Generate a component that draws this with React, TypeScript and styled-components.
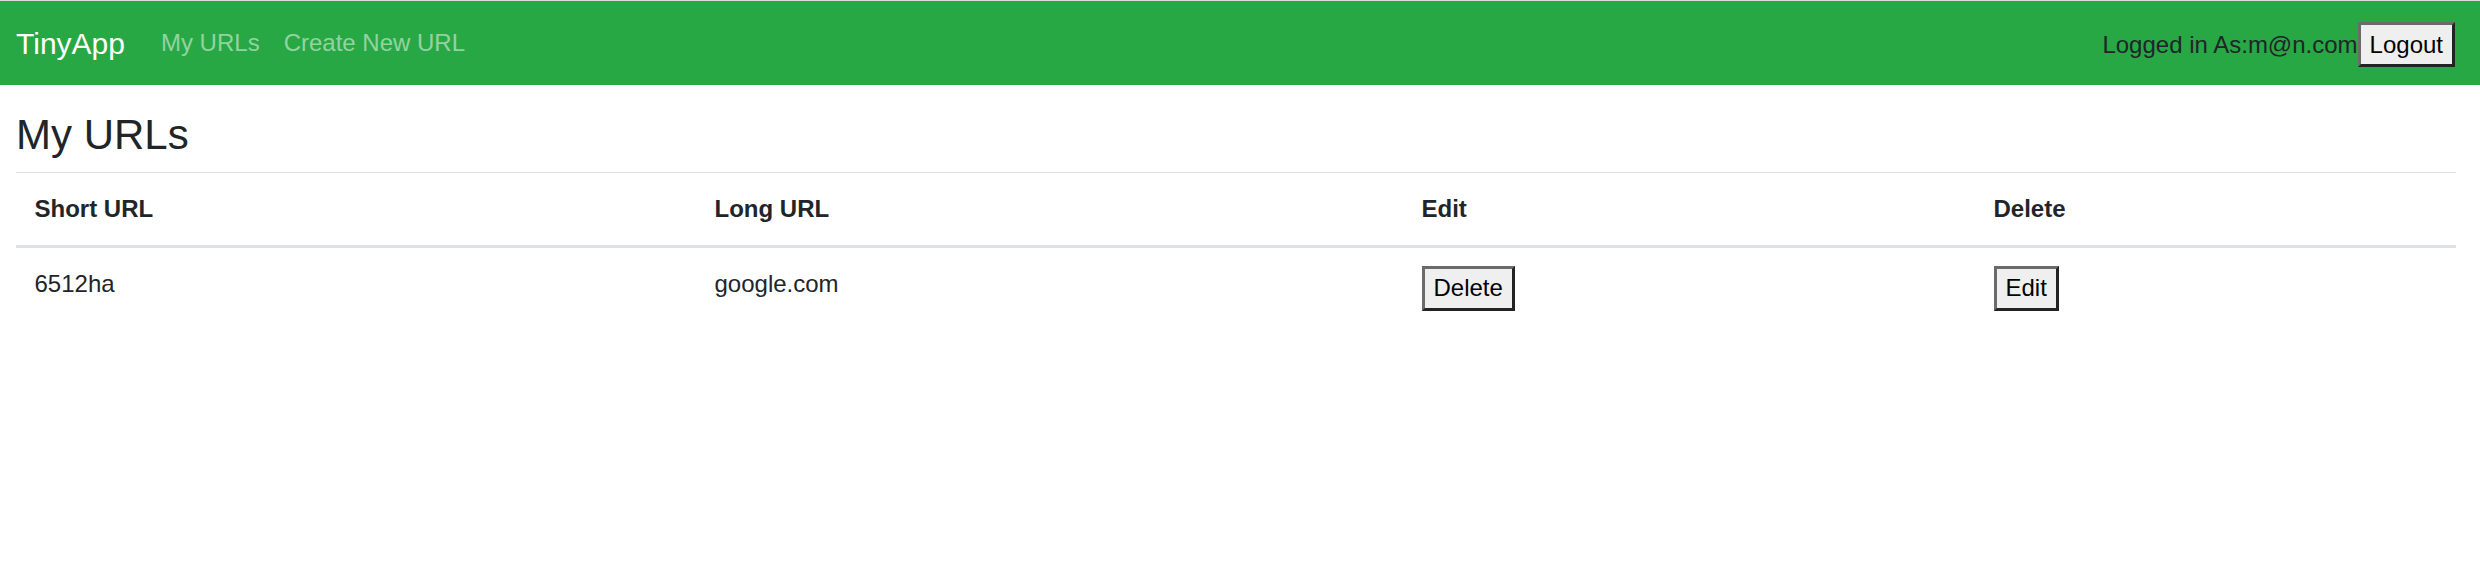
import React from 'react';
import styled, { createGlobalStyle } from 'styled-components';

const GlobalStyle = createGlobalStyle`
  *, *::before, *::after { box-sizing: border-box; }
  html, body { margin: 0; padding: 0; background: #fff; }
  body {
    font-family: "Liberation Sans", Arial, Helvetica, sans-serif;
    font-size: 24px;
    line-height: 1.5;
    color: #212529;
  }
`;

const Navbar = styled.nav`
  display: flex;
  align-items: center;
  height: 85px;
  border-top: 1px solid #dcdcdc;
  background: #28a745;
  padding: 0 25px 0 16px;
`;

const Brand = styled.a`
  font-size: 30px;
  line-height: 1.5;
  color: #fff;
  text-decoration: none;
  margin-right: 24px;
`;

const NavLinks = styled.div`
  display: flex;
  align-items: center;
`;

const NavLink = styled.a`
  color: rgba(255, 255, 255, 0.5);
  text-decoration: none;
  padding: 0 12px;
`;

const UserArea = styled.div`
  margin-left: auto;
  display: flex;
  align-items: center;
  padding-top: 3px;
`;

const UserText = styled.span`
  color: #212529;
`;

const Button = styled.button`
  font-family: "Liberation Sans", Arial, Helvetica, sans-serif;
  font-size: 24px;
  line-height: 1.5;
  color: #000;
  background: #efefef;
  padding: 1.5px 9px;
  border-width: 3px;
  border-style: solid;
  border-color: #6b6b6b #232323 #232323 #6b6b6b;
  border-radius: 0;
  margin: 0;
  cursor: pointer;
`;

const Main = styled.main`
  padding: 0 24px 0 16px;
`;

const Title = styled.h1`
  font-size: 42px;
  font-weight: 400;
  line-height: 1.2;
  margin: 24.5px 0 12px;
`;

const Table = styled.table`
  width: 100%;
  border-collapse: collapse;
  table-layout: fixed;
`;

const Col = styled.col<{ $w: number }>`
  width: ${p => p.$w}px;
`;

const Th = styled.th`
  text-align: left;
  font-weight: 700;
  vertical-align: bottom;
  padding: 18px 18.5px;
  border-top: 1px solid #dee2e6;
  border-bottom: 3px solid #dee2e6;
`;

const Td = styled.td`
  vertical-align: top;
  padding: 18px 18.5px;
  border-top: 1px solid #dee2e6;
`;

const rows = [{ short: '6512ha', long: 'google.com' }];

export default function App() {
  return (
    <>
      <GlobalStyle />
      <Navbar>
        <Brand href="#">TinyApp</Brand>
        <NavLinks>
          <NavLink href="#">My URLs</NavLink>
          <NavLink href="#">Create New URL</NavLink>
        </NavLinks>
        <UserArea>
          <UserText>Logged in As:m@n.com</UserText>
          <Button>Logout</Button>
        </UserArea>
      </Navbar>
      <Main>
        <Title>My URLs</Title>
        <Table>
          <colgroup>
            <Col $w={680} />
            <Col $w={707} />
            <Col $w={572} />
            <Col $w={481} />
          </colgroup>
          <thead>
            <tr>
              <Th>Short URL</Th>
              <Th>Long URL</Th>
              <Th>Edit</Th>
              <Th>Delete</Th>
            </tr>
          </thead>
          <tbody>
            {rows.map(r => (
              <tr key={r.short}>
                <Td>{r.short}</Td>
                <Td>{r.long}</Td>
                <Td><Button>Delete</Button></Td>
                <Td><Button>Edit</Button></Td>
              </tr>
            ))}
          </tbody>
        </Table>
      </Main>
    </>
  );
}
